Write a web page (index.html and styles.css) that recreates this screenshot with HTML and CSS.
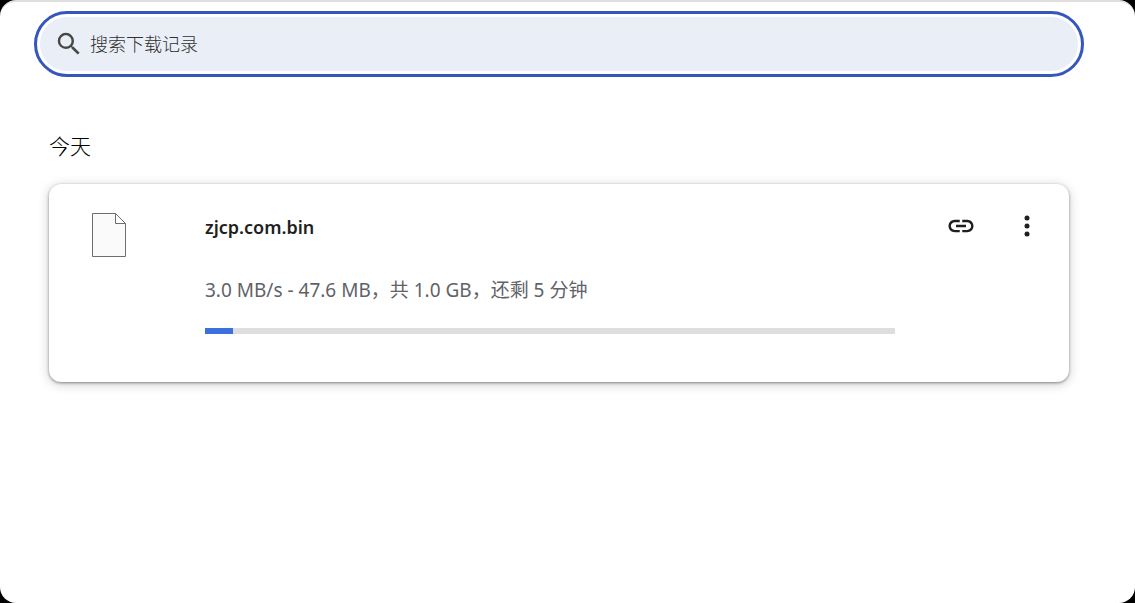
FILE: index.html
```html
<!DOCTYPE html>
<html lang="zh-CN">
<head>
  <meta charset="UTF-8" />
  <meta name="viewport" content="width=device-width, initial-scale=1.0" />
  <title>下载记录</title>
  <link rel="stylesheet" href="styles.css">
</head>
<body>
<div class="page">
  <form class="search" role="search">
    <div class="search-field">
      <label for="search-input" aria-label="搜索">
        <svg class="search-icon" viewBox="0 0 24 24"><path d="M15.5 14h-.79l-.28-.27A6.47 6.47 0 0 0 16 9.5 6.5 6.5 0 1 0 9.5 16c1.61 0 3.09-.59 4.23-1.57l.27.28v.79l5 4.99L20.49 19l-4.99-5zm-6 0C7.01 14 5 11.99 5 9.5S7.01 5 9.5 5 14 7.01 14 9.5 11.99 14 9.5 14z"/></svg>
      </label>
      <input id="search-input" type="text" placeholder="搜索下载记录" />
    </div>
  </form>

  <main class="downloads">
    <h2>今天</h2>
    <div class="card">
      <svg class="file-icon" viewBox="0 0 36 46"><path d="M1.5 1.5h23l10 10v33h-33z"/><path class="fold" d="M24.5 1.5v10h10z"/></svg>
      <div class="details">
        <div class="name">zjcp.com.bin</div>
        <div class="status">3.0 MB/s - 47.6 MB，共 1.0 GB，还剩 5 分钟</div>
        <progress value="4" max="100" aria-label="下载进度"></progress>
      </div>
      <div class="actions">
        <button type="button" aria-label="复制下载链接">
          <svg class="link-icon" viewBox="0 0 24 24"><path d="M3.9 12c0-1.71 1.39-3.1 3.1-3.1h4V7H7c-2.76 0-5 2.24-5 5s2.24 5 5 5h4v-1.9H7c-1.71 0-3.1-1.39-3.1-3.1zM8 13h8v-2H8v2zm9-6h-4v1.9h4c1.71 0 3.1 1.39 3.1 3.1s-1.39 3.1-3.1 3.1h-4V17h4c2.76 0 5-2.24 5-5s-2.24-5-5-5z"/></svg>
        </button>
        <button type="button" aria-label="更多操作">
          <svg class="more-icon" viewBox="0 0 24 24"><circle cx="12" cy="4" r="2.5"/><circle cx="12" cy="12" r="2.5"/><circle cx="12" cy="20" r="2.5"/></svg>
        </button>
      </div>
    </div>
  </main>
</div>
</body>
</html>
```

FILE: styles.css
```css
* {
  box-sizing: border-box;
}
body {
  margin: 0;
  background: #000;
  color: #1f1f1f;
  font-family: 'Noto Sans', 'Noto Sans CJK SC', sans-serif;
}
.page {
  min-height: 100vh;
  padding: 9px 51px 40px 34px;
  border-top: 2px solid #e0e0e0;
  border-radius: 16px;
  background: #fff;
}
.search {
  padding: 3px;
  border: 3px solid #3557bc;
  border-radius: 33px;
}
.search-field {
  display: flex;
  align-items: center;
  gap: 6px;
  height: 54px;
  padding: 0 14px;
  border-radius: 27px;
  background: #eaeef6;
}
.search-field label {
  display: flex;
}
.search-icon {
  width: 30px;
  height: 30px;
  fill: #474747;
}
.search-field input {
  flex: 1;
  min-width: 0;
  padding: 0 0 2px;
  border: none;
  outline: none;
  background: transparent;
  color: #1f1f1f;
  font-family: 'Noto Sans CJK SC', sans-serif;
  font-size: 18px;
  font-weight: 300;
}
.search-field input::placeholder {
  color: #303030;
  opacity: 1;
}
.downloads {
  padding: 52px 15px 0;
}
h2 {
  margin: 0 0 23px;
  color: #000;
  font-family: 'Noto Sans CJK SC', sans-serif;
  font-size: 21px;
  font-weight: 300;
  line-height: 32px;
}
.card {
  display: flex;
  align-items: flex-start;
  min-height: 198px;
  padding: 28px 26px 24px 42px;
  border-radius: 12px;
  background: #fff;
  box-shadow: 0 1px 3px rgba(0, 0, 0, 0.4), 0 2px 12px rgba(0, 0, 0, 0.2);
}
.file-icon {
  flex: none;
  width: 36px;
  height: 46px;
  fill: #fafafa;
  stroke: #6e6e6e;
  stroke-width: 1;
}
.file-icon .fold {
  fill: #fff;
}
.details {
  flex: 1;
  min-width: 0;
  margin-left: 78px;
}
.name {
  font-size: 18px;
  font-weight: 600;
  line-height: 30px;
}
.status {
  margin-top: 33px;
  color: #5f6368;
  font-size: 19px;
  line-height: 30px;
}
progress {
  display: block;
  width: 100%;
  height: 6px;
  margin-top: 23px;
  border: none;
  background: #dedede;
  appearance: none;
}
progress::-webkit-progress-bar {
  background: #dedede;
}
progress::-webkit-progress-value {
  background: #3b70dd;
}
.actions {
  display: flex;
  gap: 34px;
  margin-left: 50px;
}
.actions button {
  display: flex;
  align-items: center;
  justify-content: center;
  width: 32px;
  height: 28px;
  padding: 0;
  border: none;
  background: transparent;
  cursor: pointer;
}
.link-icon {
  width: 30px;
  height: 30px;
  fill: #1f1f1f;
}
.more-icon {
  width: 24px;
  height: 24px;
  fill: #1f1f1f;
}
```
